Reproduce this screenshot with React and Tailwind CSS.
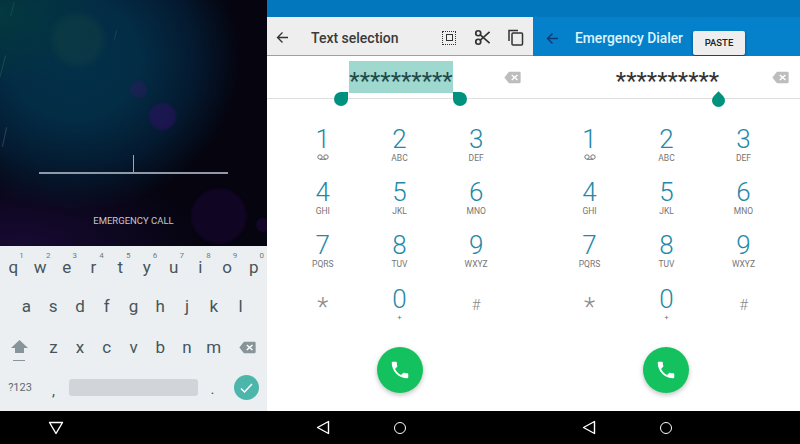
import React from "react";

const rows = [
  [["1", "oo"], ["2", "ABC"], ["3", "DEF"]],
  [["4", "GHI"], ["5", "JKL"], ["6", "MNO"]],
  [["7", "PQRS"], ["8", "TUV"], ["9", "WXYZ"]],
];

function Backspace({ className, fill = "#bdbdbd" }) {
  return (
    <svg viewBox="0 0 24 18" className={className}>
      <path d="M7 1h15a1.500 1.500 0 0 1 1.500 1.500v13A1.500 1.500 0 0 1 22 17H7L0.500 9z" fill={fill} />
      <path d="M11 5.500l8 7M19 5.500l-8 7" stroke="#fff" strokeWidth="2.200" />
    </svg>
  );
}

function Nav({ down = false }) {
  return (
    <div className="h-[33px] bg-black grid grid-cols-[77px_77px] pl-[17px] items-center">
      <div className="flex justify-center">
        {down ? (
          <svg width="16" height="14" viewBox="0 0 16 14" fill="none" stroke="#fff" strokeWidth="1.400">
            <path d="M1.500 1.500h13L8 12.500z" strokeLinejoin="round" />
          </svg>
        ) : (
          <svg width="14" height="15" viewBox="0 0 14 15" fill="none" stroke="#fff" strokeWidth="1.400">
            <path d="M12.500 1.500v12L1.500 7.500z" strokeLinejoin="round" />
          </svg>
        )}
      </div>
      <div className="flex justify-center">
        {!down && <div className="w-[12px] h-[12px] rounded-full border-[1.5px] border-white" />}
      </div>
    </div>
  );
}

function Key({ l, n }) {
  return (
    <div className="relative flex-1 flex justify-center items-center text-[17px] text-[#46555b]">
      {n && <span className="absolute top-[3px] right-[3px] text-[8px] leading-none text-[#6f7b80]">{n}</span>}
      {l}
    </div>
  );
}

function Keyboard() {
  const r1 = "qwertyuiop".split("");
  const nums = "1234567890".split("");
  return (
    <div className="h-[165px] bg-[#eceff1] flex flex-col">
      <div className="flex h-[41px] pt-[3px]">
        {r1.map((l, i) => <Key key={l} l={l} n={nums[i]} />)}
      </div>
      <div className="flex h-[40px] px-[13px]">
        {"asdfghjkl".split("").map((l) => <Key key={l} l={l} />)}
      </div>
      <div className="flex h-[41px]">
        <div className="w-[38px] flex flex-col items-center pt-[13px]">
          <svg width="17" height="13" viewBox="0 0 17 13"><path d="M8.500 0L17 8h-4v5H4V8H0z" fill="#87949a" /></svg>
          <div className="w-[12px] h-px bg-[#8a9599] mt-[7px]" />
        </div>
        <div className="flex flex-1 ml-[2px]">
          {"zxcvbnm".split("").map((l) => <Key key={l} l={l} />)}
        </div>
        <div className="w-[40px] flex items-center justify-center">
          <Backspace className="w-[17px] h-[13px]" fill="#87949a" />
        </div>
      </div>
      <div className="flex h-[43px] items-center">
        <div className="w-[40px] text-center text-[11px] text-[#5f6b70] pb-[3px]">?123</div>
        <div className="w-[27px] text-center text-[15px] text-[#46555b] pt-[4px]">,</div>
        <div className="w-[129px] h-[17px] rounded-[3px] bg-[#cfd5d8] mb-[4px] ml-[2px]" />
        <div className="w-[29px] text-center text-[15px] text-[#46555b]">.</div>
        <div className="flex-1 flex justify-center pr-px">
          <div className="w-[25px] h-[25px] rounded-full bg-[#4db6ac] flex items-center justify-center mb-[4px]">
            <svg width="13" height="10" viewBox="0 0 13 10" fill="none" stroke="#fff" strokeWidth="1.500"><path d="M1 5.500l3.500 3.500L12 1" /></svg>
          </div>
        </div>
      </div>
    </div>
  );
}

function Lock() {
  return (
    <div className="relative h-[246px] overflow-hidden bg-[#05040f] bg-[radial-gradient(ellipse_40%_30%_at_0%_5%,#03393f_0%,transparent_100%),radial-gradient(ellipse_62%_62%_at_28%_24%,#03304a_0%,#032c45_40%,#041a30_72%,transparent_100%),radial-gradient(ellipse_70%_35%_at_8%_100%,#170a33_0%,transparent_100%)]">
      <div className="absolute left-[52px] top-[14px] w-[52px] h-[52px] rounded-full bg-[#1c4a40]/30 blur-[3px]" />
      <div className="absolute left-[130px] top-[81px] w-[17px] h-[17px] rounded-full bg-[#2c1a60]/50 blur-[1px]" />
      <div className="absolute left-[149px] top-[103px] w-[27px] h-[27px] rounded-full bg-[#2a1260]/60 blur-[1px]" />
      <div className="absolute left-[191px] top-[188px] w-[56px] h-[56px] rounded-full bg-[#1c0636]/50 blur-[1px]" />
      <div className="absolute left-[256px] top-[218px] w-[14px] h-[14px] rounded-full bg-[#2a0a50]/40" />
      <div className="absolute left-[2px] top-[55px] w-px h-[24px] rotate-[15deg] bg-[#2d6a60]/50" />
      <div className="absolute left-[12px] top-[2px] w-px h-[14px] rotate-[15deg] bg-[#2d6a60]/40" />
      <div className="absolute left-[4px] top-[127px] w-px h-[20px] rotate-[12deg] bg-[#4a6a78]/50" />
      <div className="absolute left-[115px] top-[30px] w-px h-[10px] rotate-[15deg] bg-[#3a6a88]/30" />
      <div className="absolute left-[133px] top-[155px] w-px h-[17px] bg-[#a0a8b6]" />
      <div className="absolute left-[39px] top-[172px] w-[189px] h-[2px] bg-[#8f99a8]" />
      <div className="absolute inset-x-0 top-[214px] text-center text-[9.5px] leading-[14px] text-[#c4c8d0]">EMERGENCY CALL</div>
    </div>
  );
}

function Dialpad({ padClass, fabClass }) {
  return (
    <div className="flex-1 bg-white flex flex-col items-center">
      <div className={"w-full pt-[26px] " + padClass}>
        {rows.map((row, i) => (
          <div key={i} className="grid grid-cols-3 h-[53px]">
            {row.map(([d, s]) => (
              <div key={d} className="flex flex-col items-center">
                <span className="text-[26px] leading-[28px] font-light text-[#1f8aa8]">{d}</span>
                {d === "1" ? (
                  <svg width="12" height="6" viewBox="0 0 12 6" fill="none" stroke="#777" className="mt-[1px]">
                    <circle cx="3" cy="3" r="2.200" /><circle cx="9" cy="3" r="2.200" /><path d="M3 5.300h6" />
                  </svg>
                ) : (
                  <span className="text-[8.5px] leading-[10px] text-[#757575]">{s}</span>
                )}
              </div>
            ))}
          </div>
        ))}
        <div className="grid grid-cols-3 h-[36px] mt-[2px]">
          <div className="flex justify-center items-center text-[26px] font-light leading-[28px] text-[#8a8a8a] pt-[4px]">*</div>
          <div className="flex flex-col items-center">
            <span className="text-[26px] leading-[27px] font-light text-[#1f8aa8]">0</span>
            <span className="text-[8px] leading-[10px] text-[#757575]">+</span>
          </div>
          <div className="flex justify-center items-center text-[15px] font-light leading-[28px] text-[#8a8a8a]">#</div>
        </div>
      </div>
      <div className={"mt-[25px] w-[46px] h-[46px] rounded-full bg-[#14c15f] shadow-[0_2px_5px_rgba(0,0,0,0.25)] flex items-center justify-center " + fabClass}>
        <svg width="22" height="22" viewBox="0 0 24 24" fill="#fff">
          <path d="M6.620 10.790c1.440 2.830 3.760 5.140 6.590 6.590l2.200-2.200c.270-.270.670-.360 1.020-.240 1.120.370 2.330.570 3.570.570.550 0 1 .450 1 1V20c0 .550-.450 1-1 1-9.390 0-17-7.610-17-17 0-.550.450-1 1-1h3.500c.550 0 1 .450 1 1 0 1.250.200 2.450.570 3.570.110.350.030.740-.250 1.020l-2.200 2.200z" />
        </svg>
      </div>
    </div>
  );
}

function Left() {
  return (
    <div className="w-[267px] flex flex-col">
      <Lock />
      <Keyboard />
      <Nav down />
    </div>
  );
}

function Middle() {
  return (
    <div className="w-[266px] flex flex-col">
      <div className="h-[17px] bg-[#0277bd]" />
      <div className="h-[39px] bg-[#eeeeee] border-b border-[#26a69a]/70 flex items-center pl-[9px] pt-[3px]">
        <svg width="13" height="13" viewBox="0 0 13 13" fill="none" stroke="#333" strokeWidth="1.300"><path d="M12 6.500H1.500M6.500 1.500l-5 5 5 5" /></svg>
        <span className="ml-[22px] text-[14px] font-medium text-[#3a3a3a] flex-1 pt-px">Text selection</span>
        <div className="w-[14px] h-[14px] border border-dotted border-[#333] flex items-center justify-center mr-[18px]">
          <div className="w-[7px] h-[7px] border border-[#333]" />
        </div>
        <svg width="17" height="17" viewBox="0 0 24 24" fill="none" stroke="#333" strokeWidth="2.400" className="mr-[17px]">
          <circle cx="6" cy="6" r="3.500" /><circle cx="6" cy="18" r="3.500" /><path d="M8.500 8L22 20M8.500 16L22 4" />
        </svg>
        <svg width="16" height="17" viewBox="0 0 16 17" fill="none" stroke="#333" strokeWidth="1.500" className="mr-[9px]">
          <path d="M1 12V1.500h9" /><rect x="4" y="4" width="10.500" height="12" rx="1" />
        </svg>
      </div>
      <div className="relative h-[43px] bg-white border-b border-[#e0e0e0] flex">
        <div className="ml-[82px] mt-[5px] w-[104px] h-[32px] bg-[#9fd8cf] flex items-center justify-center overflow-hidden">
          <span className="text-[24px] leading-[24px] text-[#1f4a4a] pt-[7px]">**********</span>
        </div>
        <Backspace className="absolute right-[12px] top-[15px] w-[17px] h-[13px]" />
        <div className="absolute left-[67px] top-[36px] w-[14px] h-[14px] rounded-full rounded-tr-none bg-[#00927f]" />
        <div className="absolute left-[186px] top-[36px] w-[14px] h-[14px] rounded-full rounded-tl-none bg-[#00927f]" />
      </div>
      <Dialpad padClass="pl-[17.5px] pr-[18.5px]" fabClass="" />
      <Nav />
    </div>
  );
}

function Right() {
  return (
    <div className="w-[267px] flex flex-col">
      <div className="h-[17px] bg-[#0277bd]" />
      <div className="relative h-[39px] bg-[#0581cb] flex items-center pl-[13px] pt-[3px]">
        <svg width="13" height="13" viewBox="0 0 13 13" fill="none" stroke="#0d3c78" strokeWidth="1.500"><path d="M12 6.500H1.500M6.500 1.500l-5 5 5 5" /></svg>
        <span className="ml-[16px] text-[13.8px] font-medium text-[#dff3fb] pt-px">Emergency Dialer</span>
        <div className="absolute left-[160px] top-[14px] w-[52px] h-[24px] rounded-[2px] bg-[#eeeeee] shadow-[0_2px_3px_rgba(0,0,0,0.45)] flex items-center justify-center text-[9.5px] font-medium text-[#222]">PASTE</div>
      </div>
      <div className="relative h-[43px] bg-white border-b border-[#e0e0e0] flex">
        <div className="ml-[82px] mt-[5px] w-[105px] h-[32px] flex items-center justify-center overflow-hidden">
          <span className="text-[24px] leading-[24px] text-[#333] pt-[7px]">**********</span>
        </div>
        <Backspace className="absolute right-[11px] top-[15px] w-[17px] h-[13px]" />
        <div className="absolute left-[179px] top-[38px] w-[13px] h-[13px] rounded-full rounded-tr-none -rotate-45 bg-[#00927f]" />
      </div>
      <Dialpad padClass="px-[18px]" fabClass="mr-px" />
      <Nav />
    </div>
  );
}

export default function App() {
  return (
    <div className="w-[800px] h-[444px] flex overflow-hidden font-['Roboto',sans-serif]">
      <Left />
      <Middle />
      <Right />
    </div>
  );
}
